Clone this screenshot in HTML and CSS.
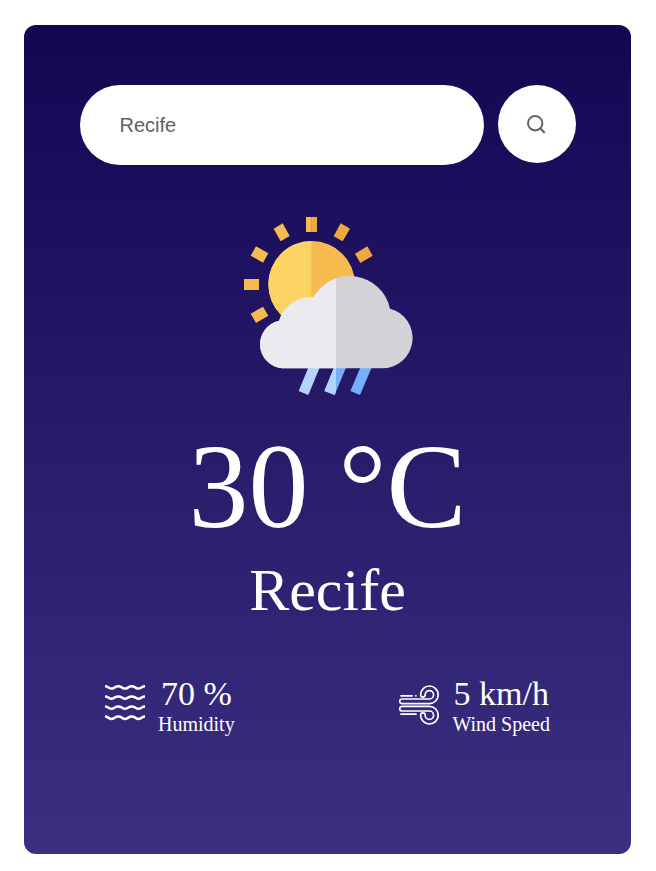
FILE: index.html
```html
<!DOCTYPE html>
<html lang="en">
<head>
<meta charset="utf-8">
<title>Weather</title>
<link rel="stylesheet" href="styles.css">
</head>
<body>
<main class="card">
  <form class="search">
    <input class="search-input" type="text" placeholder="Recife" aria-label="City">
    <button class="search-button" type="button" aria-label="Search">
      <svg class="search-icon" viewBox="0 0 20 20"><circle cx="8.2" cy="9.2" r="7.2"/><path d="M13.2 14.2L17.7 19"/></svg>
    </button>
  </form>

  <svg class="weather-icon" viewBox="0 0 600 600" aria-hidden="true">
    <defs>
      <clipPath id="left-sun"><rect width="244" height="600"/></clipPath>
      <clipPath id="left-cloud"><rect width="318" height="600"/></clipPath>
      <path id="cloud" d="M156 490A72.5 72.5 0 0 1 147 347A102 102 0 0 1 251 276A124 124 0 0 1 480 311A91 91 0 0 1 456 490Z"/>
      <path id="drop" d="M314 483H350L314 570L283 558Z"/>
    </defs>
    <g fill="#f5bb4f">
      <path d="M131 71L158 55L179 93L152 109ZM78 124L115 145L99 173L62 152ZM42 222H87V255H42ZM62 326L99 305L115 332L78 354Z"/>
      <rect x="228" y="36" width="17" height="45"/>
    </g>
    <path fill="#f0a941" d="M244 36H261V81H244ZM332 55L360 71L338 109L311 94ZM375 146L412 124L428 152L391 174Z"/>
    <circle cx="245" cy="238" r="130" fill="#f5bb4f"/>
    <circle cx="245" cy="238" r="130" fill="#fbd463" clip-path="url(#left-sun)"/>
    <path fill="#b3d4fc" d="M237 483H271L235 570L206 558Z"/>
    <use href="#drop" fill="#73affa"/>
    <use href="#drop" fill="#b3d4fc" clip-path="url(#left-cloud)"/>
    <path fill="#73affa" d="M393 483H427L390 570L361 558Z"/>
    <use href="#cloud" fill="#d3d2d7"/>
    <use href="#cloud" fill="#ebeaef" clip-path="url(#left-cloud)"/>
  </svg>

  <div class="temperature">30 °C</div>
  <div class="city">Recife</div>

  <section class="details">
    <div class="detail">
      <svg class="detail-icon" viewBox="0 0 40 40" aria-hidden="true">
        <defs><path id="wave" d="M0 0C3 0 4 2.3 6.5 2.3S10 0 13.3 0S17.5 2.3 20 2.3S23.5 0 26.7 0S31 2.3 33.5 2.3S37 0 40 0"/></defs>
        <g fill="none" stroke="#fff" stroke-width="2.5">
          <use href="#wave" y="1.3"/><use href="#wave" y="11.4"/><use href="#wave" y="21.5"/><use href="#wave" y="31.6"/>
        </g>
      </svg>
      <div class="detail-text">
        <div class="value">70 %</div>
        <div class="label">Humidity</div>
      </div>
    </div>
    <div class="detail">
      <svg class="detail-icon" viewBox="0 0 40 40" aria-hidden="true">
        <g fill="none" stroke="#fff" stroke-width="1.7" stroke-linecap="round" stroke-linejoin="round">
          <path d="M2 10.8H13.2M16.7 10.8H17"/>
          <path d="M30.4 18.6H3A2.3 2.3 0 0 1 3 14H30.4A4.2 4.2 0 1 0 26.2 9.8A2.2 2.2 0 0 1 21.6 9.8A8.8 8.8 0 1 1 30.4 18.6"/>
          <path d="M30.4 21.4H3A2.3 2.3 0 0 0 3 26H30.4A4.2 4.2 0 1 1 26.2 30.2A2.2 2.2 0 0 0 21.6 30.2A8.8 8.8 0 1 0 30.4 21.4"/>
          <path d="M2 29.2H17"/>
        </g>
      </svg>
      <div class="detail-text">
        <div class="value">5 km/h</div>
        <div class="label">Wind Speed</div>
      </div>
    </div>
  </section>
</main>
</body>
</html>
```
FILE: styles.css
```css
* { box-sizing: border-box; }

body {
  margin: 0;
  background: #fff;
  font-family: "Liberation Serif", "Times New Roman", serif;
}

.card {
  display: flex;
  flex-direction: column;
  align-items: center;
  width: 607px;
  height: 829px;
  margin: 25px 0 0 24px;
  padding-top: 60px;
  border-radius: 12px;
  background: linear-gradient(180deg, #130754 0%, #3b2f80 100%);
  color: #fff;
}

.search {
  display: flex;
  gap: 14px;
  width: 496px;
  margin-left: 1px;
}

.search-input {
  width: 404px;
  height: 80px;
  padding: 0 40px 0 39.5px;
  border: 0;
  border-radius: 40px;
  background: #fff;
  color: #626262;
  font: 20px "Liberation Sans", Arial, sans-serif;
}

.search-input::placeholder { color: #626262; }

.search-button {
  display: flex;
  align-items: center;
  justify-content: center;
  width: 78px;
  height: 78px;
  padding: 0;
  border: 0;
  border-radius: 50%;
  background: #fff;
}

.search-icon {
  width: 20px;
  height: 20px;
  fill: none;
  stroke: #626262;
  stroke-width: 2;
}

.weather-icon {
  width: 200px;
  height: 200px;
  margin: 40px 0 0 5px;
}

.temperature {
  margin-top: 13px;
  font-size: 120px;
  line-height: 138px;
}

.city {
  font-size: 60px;
  line-height: 68px;
}

.details {
  display: flex;
  justify-content: space-between;
  width: 445px;
  margin-top: 50px;
}

.detail {
  display: flex;
  gap: 13px;
}

.detail-icon {
  width: 40px;
  height: 40px;
  margin-top: 11px;
}

.detail-text { text-align: center; }

.value {
  font-size: 34px;
  line-height: 39px;
}

.label {
  font-size: 20px;
  line-height: 22px;
}
```
